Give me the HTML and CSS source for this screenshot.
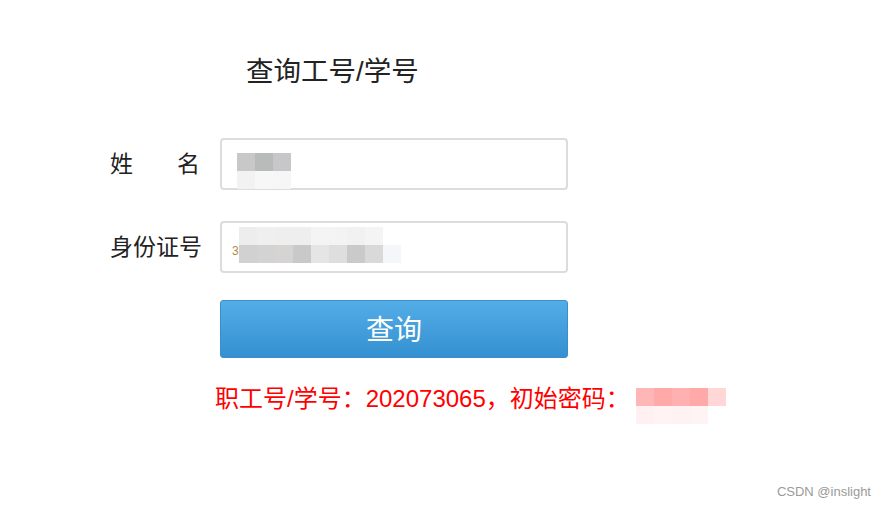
FILE: index.html
```html
<!DOCTYPE html>
<html lang="zh-CN">
<head>
<meta charset="utf-8">
<title>查询工号/学号</title>
<link rel="stylesheet" href="styles.css">
</head>
<body>
<div class="page">
  <h1 class="title">查询工号/学号</h1>
  <div class="row row-name">
    <div class="label label-name"><span>姓</span><span>名</span></div>
    <div class="field">
      <div class="mosaic">
        <div class="mrow"><i style="background:#c8c8c8"></i><i style="background:#b9bbba"></i><i style="background:#c7c7c9"></i></div>
        <div class="mrow"><i style="background:#f2f2f2"></i><i style="background:#f7f7f7"></i><i style="background:#f6f6f6"></i></div>
      </div>
    </div>
  </div>
  <div class="row row-id">
    <div class="label">身份证号</div>
    <div class="field field-id">
      <span class="lead">3</span>
      <div class="mosaic">
        <div class="mrow"><i style="background:#ededed"></i><i style="background:#efefef"></i><i style="background:#eeeeee"></i><i style="background:#eeeeee"></i><i style="background:#f4f4f4"></i><i style="background:#f3f3f3"></i><i style="background:#f1f1f1"></i><i style="background:#f4f4f4"></i></div>
        <div class="mrow"><i style="background:#d1d1d1"></i><i style="background:#d3d3d3"></i><i style="background:#d5d4d3"></i><i style="background:#c9c9ca"></i><i style="background:#e5e5e5"></i><i style="background:#dedede"></i><i style="background:#cbcacb"></i><i style="background:#d9d9d9"></i><i style="background:#f4f6f9"></i></div>
      </div>
    </div>
  </div>
  <div class="row row-btn">
    <button class="btn" type="button">查询</button>
  </div>
  <p class="notice">职工号/学号：202073065，初始密码：<span class="mosaic mosaic-red"><span class="mrow"><i style="background:#ffb6b6"></i><i style="background:#ffa9a9"></i><i style="background:#ffb1b1"></i><i style="background:#ffa9a9"></i><i style="background:#ffd7d7"></i></span><span class="mrow"><i style="background:#fff1f1"></i><i style="background:#fff3f3"></i><i style="background:#fff2f2"></i><i style="background:#fff4f4"></i></span></span></p>
</div>
<div class="watermark">CSDN @inslight</div>
</body>
</html>
```
FILE: styles.css
```css
* { box-sizing: border-box; }
html, body { margin: 0; padding: 0; background: #fff; }
body {
  width: 886px;
  height: 509px;
  overflow: hidden;
  position: relative;
  font-family: "Liberation Sans", "Noto Sans CJK SC", sans-serif;
  color: #333;
}
.page {
  padding: 57px 0 0 110px;
  display: flex;
  flex-direction: column;
}
.title {
  margin: 0 0 51px 136px;
  font-size: 27.5px;
  font-weight: normal;
  line-height: 30px;
  height: 30px;
  color: #222;
}
.row {
  display: flex;
  align-items: center;
  gap: 20px;
}
.row-name { margin-bottom: 31px; }
.row-id { margin-bottom: 27px; }
.row-btn { padding-left: 110px; }
.label {
  width: 90px;
  font-size: 23px;
  line-height: 28px;
  color: #222;
  white-space: nowrap;
}
.label-name {
  display: flex;
  justify-content: space-between;
}
.field {
  width: 348px;
  height: 52px;
  border: 2px solid #dcdcdc;
  border-radius: 4px;
  display: flex;
  align-items: flex-start;
  padding: 13px 0 0 15px;
}
.field-id { padding: 4px 0 0 10px; align-items: flex-start; }
.lead {
  font-size: 12px;
  line-height: 18px;
  margin-top: 15px;
  width: 7px;
  color: #b88a44;
  overflow: hidden;
}
.mosaic { display: inline-flex; flex-direction: column; }
.mrow { display: flex; }
.mrow i { display: block; width: 18px; height: 18px; }
.btn {
  width: 348px;
  height: 58px;
  border: 1px solid #3a8ecb;
  border-radius: 3px;
  background: linear-gradient(#53ade7, #3490d0);
  color: #fff;
  font-family: "Liberation Sans", "Noto Sans CJK SC", sans-serif;
  font-size: 28px;
  line-height: 30px;
  padding: 3px 0 0;
}
.notice {
  margin: 29px 0 0 105px;
  font-size: 24px;
  line-height: 24px;
  color: #ff0000;
  display: flex;
  align-items: flex-start;
  white-space: nowrap;
}
.mosaic-red { margin-left: 6px; margin-top: 1px; }
.watermark {
  position: absolute;
  right: 15px;
  top: 484px;
  font-size: 13px;
  line-height: 16px;
  color: #9a9a9a;
}
```
